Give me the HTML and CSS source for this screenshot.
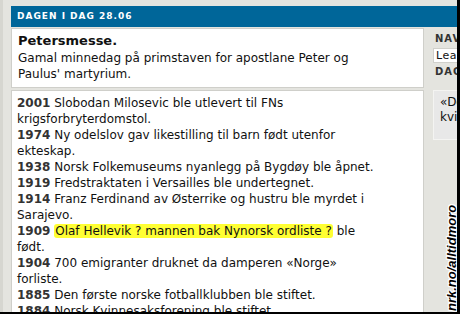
FILE: index.html
```html
<!DOCTYPE html>
<html lang="no">
<head>
<meta charset="utf-8">
<link rel="stylesheet" href="styles.css">
</head>
<body>
<div class="frame">
  <div class="page">
    <div class="bar">DAGEN I DAG 28.06</div>
    <div class="cols">
      <div class="main">
        <div class="box intro">
          <div class="title">Petersmesse.</div>
          <div>Gamal minnedag på primstaven for apostlane Peter og<br>Paulus' martyrium.</div>
        </div>
        <div class="box events">
          <p><b>2001</b> Slobodan Milosevic ble utlevert til FNs<br>krigsforbryterdomstol.</p>
          <p><b>1974</b> Ny odelslov gav likestilling til barn født utenfor<br>ekteskap.</p>
          <p><b>1938</b> Norsk Folkemuseums nyanlegg på Bygdøy ble åpnet.</p>
          <p><b>1919</b> Fredstraktaten i Versailles ble undertegnet.</p>
          <p><b>1914</b> Franz Ferdinand av Østerrike og hustru ble myrdet i<br>Sarajevo.</p>
          <p><b>1909</b> <span class="hl">Olaf Hellevik ? mannen bak Nynorsk ordliste ?</span> ble<br>født.</p>
          <p><b>1904</b> 700 emigranter druknet da damperen «Norge»<br>forliste.</p>
          <p><b>1885</b> Den første norske fotballklubben ble stiftet.</p>
          <p><b>1884</b> Norsk Kvinnesaksforening ble stiftet.</p>
        </div>
      </div>
      <div class="side">
        <div class="shead first">NAVNEDAG</div>
        <div class="sbox">Lea, Leo</div>
        <div class="shead">DAGENS SITAT</div>
        <div class="quote">«Det er kvinner</div>
      </div>
    </div>
  </div>
  <div class="stamp">nrk.no/alltidmoro</div>
</div>
</body>
</html>
```
FILE: styles.css
```css
html, body {
  margin: 0;
  padding: 0;
  background: #e4e4df;
}
.frame {
  position: relative;
  width: 460px;
  height: 314px;
  box-sizing: border-box;
  border-right: 3px solid #000;
  border-bottom: 2px solid #000;
  overflow: hidden;
  background: #e4e4df;
  font-family: "DejaVu Sans", Verdana, sans-serif;
  font-size: 12px;
  color: #111;
}
.page {
  padding: 6px 0 0 11px;
  height: 100%;
  box-sizing: border-box;
  background: linear-gradient(to right, #d6d6d0 0, #d6d6d0 3px, #e4e4df 3px);
}
.bar {
  background: #006699;
  color: #fff;
  font-weight: bold;
  font-size: 9px;
  letter-spacing: 1px;
  height: 21px;
  line-height: 21px;
  padding-left: 6px;
  white-space: nowrap;
}
.cols {
  display: flex;
  gap: 9px;
  width: 560px;
}
.main {
  width: 413px;
  flex: none;
}
.box {
  background: #fff;
  border: 1px solid #cfcfca;
  box-sizing: border-box;
}
.intro {
  margin-top: 1px;
  height: 60px;
  padding: 3px 6px 0 6px;
  line-height: 16px;
  white-space: nowrap;
}
.title {
  font-weight: bold;
  font-size: 13px;
  line-height: 18px;
}
.events {
  margin-top: 2px;
  padding: 4px 6px 0 5px;
  line-height: 16px;
  height: 300px;
  white-space: nowrap;
}
.events p {
  margin: 0;
}
.events b {
  color: #333;
}
.hl {
  background: #ffff33;
  border-radius: 3px;
  padding: 0 1px;
}
.side {
  width: 120px;
  flex: none;
  white-space: nowrap;
  font-size: 11px;
}
.shead {
  font-weight: bold;
  color: #333;
  letter-spacing: 1px;
  font-size: 10px;
  height: 17px;
  line-height: 17px;
  padding-left: 2px;
}
.shead.first {
  margin-top: 2px;
  height: 19px;
  line-height: 19px;
}
.sbox {
  background: #fff;
  border: 1px solid #d0d0cb;
  height: 13px;
  line-height: 13px;
  padding-left: 2px;
  letter-spacing: 0.5px;
}
.quote {
  margin-top: 10px;
  background: #e8e8e8;
  border: 1px solid #f4f4f2;
  height: 50px;
  box-sizing: border-box;
  padding: 4px 0 0 6px;
  line-height: 15px;
  white-space: normal;
  width: 60px;
  font-size: 12px;
}
.stamp {
  position: absolute;
  left: 445px;
  top: 311px;
  transform-origin: 0 0;
  transform: rotate(-90deg);
  font-family: "Liberation Sans", Arial, sans-serif;
  font-weight: bold;
  font-style: italic;
  font-size: 13px;
  line-height: 13px;
  white-space: nowrap;
  color: #000;
  text-shadow: 1px 0 0 #fff, -1px 0 0 #fff, 0 1px 0 #fff, 0 -1px 0 #fff, 1px 1px 0 #fff, -1px -1px 0 #fff, 1px -1px 0 #fff, -1px 1px 0 #fff;
}
```
